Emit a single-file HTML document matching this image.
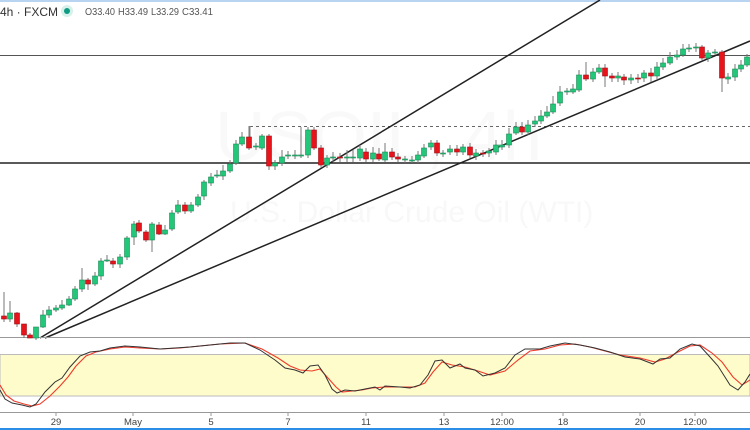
<!DOCTYPE html>
<html><head><meta charset="utf-8"><style>
html,body{margin:0;padding:0;background:#fff;width:750px;height:430px;overflow:hidden;font-family:"Liberation Sans",sans-serif}
svg{position:absolute;left:0;top:0}
.g{fill:#23c77a;stroke:#1b8a55;stroke-width:.6}
.r{fill:#e8141c;stroke:#a01015;stroke-width:.6}
</style></head><body>
<svg width="750" height="430" viewBox="0 0 750 430">
<rect x="0" y="0" width="750" height="2" fill="#b9d4f0"/>
<text x="0" y="16" font-size="12" fill="#333">4h · FXCM</text>
<circle cx="67" cy="11" r="6" fill="#d6f0ea"/><circle cx="67" cy="11" r="3" fill="#0e9a83"/>
<g font-size="10" fill="#555"><text x="85" y="15" textLength="30" lengthAdjust="spacingAndGlyphs">O33.40</text><text x="118" y="15" textLength="30" lengthAdjust="spacingAndGlyphs">H33.49</text><text x="151" y="15" textLength="28" lengthAdjust="spacingAndGlyphs">L33.29</text><text x="182" y="15" textLength="31" lengthAdjust="spacingAndGlyphs">C33.41</text></g>
<text x="215" y="160" font-size="70" fill="#f9f9f9">USOIL, 4h</text>
<text x="230" y="222" font-size="30" fill="#f8f8f8">U.S. Dollar Crude Oil (WTI)</text>
<line x1="0" y1="55.5" x2="750" y2="55.5" stroke="#555" stroke-width="1"/>
<line x1="0" y1="163" x2="750" y2="163" stroke="#222" stroke-width="1.5"/>
<line x1="250" y1="126.5" x2="750" y2="126.5" stroke="#666" stroke-width="1" stroke-dasharray="3,3"/>
<line x1="250" y1="126" x2="250" y2="138" stroke="#888"/>
<line x1="40" y1="338" x2="600" y2="0" stroke="#222" stroke-width="1.5"/>
<line x1="45" y1="338" x2="750" y2="41" stroke="#222" stroke-width="1.5"/>
<line x1="0" y1="337.5" x2="750" y2="337.5" stroke="#999"/>
<g>
<path stroke="#777" stroke-width="1" d="M4 292V322M10 301V322M17 312V327M24 324V338M30 333V338M36 327V340M43 310V328M49 306V318M56 305V312M62 300V310M69 296V306M75 286V301M82 268V292M88 278V290M95 272V286M101 258V280M107 255V262M113 258V268M120 254V268M127 236V260M134 221V245M139 220V233M146 230V242M152 222V252M159 222V235M165 225V235M172 210V231M178 200V214M185 202V214M191 202V213M198 194V207M204 180V200M211 173V186M217 170V178M223 165V180M230 160V173M236 140V165M242 132V146M249 126V150M256 143V150M262 134V150M269 134V170M275 160V170M282 150V166M288 151V159M295 150V159M301 127V158M308 127V158M314 127V150M321 145V168M327 155V168M333 152V162M340 153V162M347 150V162M353 150V162M360 145V161M366 148V162M373 147V162M379 148V161M385 143V162M392 148V160M398 153V162M405 156V163M412 156V163M418 151V163M424 144V158M431 140V150M437 140V156M443 150V157M450 145V155M457 145V156M463 144V155M470 143V158M476 149V160M483 150V157M489 148V157M496 140V155M502 140V150M509 128V148M516 122V135M522 122V135M528 120V135M535 116V127M541 110V124M547 106V118M553 96V114M560 86V106M567 88V95M573 84V94M579 70V92M586 62V81M593 68V82M599 64V74M605 64V87M612 73V82M618 72V82M624 74V85M631 74V84M638 74V83M644 70V82M651 68V82M657 62V80M663 58V70M670 52V65M677 50V60M683 44V57M689 44V52M696 43V52M702 45V60M708 50V62M715 49V55M722 50V92M728 73V84M735 64V81M741 60V72M747 54V67"/>
<rect class="r" x="1.5" y="316" width="5" height="3"/>
<rect class="g" x="7.5" y="313" width="5" height="6"/>
<rect class="r" x="14.5" y="313" width="5" height="11"/>
<rect class="r" x="21.5" y="324" width="5" height="11"/>
<rect class="r" x="27.5" y="335" width="5" height="3"/>
<rect class="g" x="33.5" y="327" width="5" height="11"/>
<rect class="g" x="40.5" y="315" width="5" height="12"/>
<rect class="g" x="46.5" y="310" width="5" height="5"/>
<rect class="g" x="53.5" y="308" width="5" height="2"/>
<rect class="g" x="59.5" y="305" width="5" height="3"/>
<rect class="g" x="66.5" y="299" width="5" height="6"/>
<rect class="g" x="72.5" y="289" width="5" height="10"/>
<rect class="g" x="79.5" y="280" width="5" height="9"/>
<rect class="r" x="85.5" y="280" width="5" height="4"/>
<rect class="g" x="92.5" y="276" width="5" height="8"/>
<rect class="g" x="98.5" y="261" width="5" height="15"/>
<rect class="g" x="104.5" y="260" width="5" height="1"/>
<rect class="r" x="110.5" y="261" width="5" height="3"/>
<rect class="g" x="117.5" y="257" width="5" height="7"/>
<rect class="g" x="124.5" y="238" width="5" height="19"/>
<rect class="g" x="131.5" y="224" width="5" height="13"/>
<rect class="r" x="136.5" y="223" width="5" height="8"/>
<rect class="r" x="143.5" y="232" width="5" height="8"/>
<rect class="g" x="149.5" y="224" width="5" height="16"/>
<rect class="r" x="156.5" y="225" width="5" height="9"/>
<rect class="g" x="162.5" y="230" width="5" height="4"/>
<rect class="g" x="169.5" y="213" width="5" height="16"/>
<rect class="g" x="175.5" y="205" width="5" height="7"/>
<rect class="r" x="182.5" y="205" width="5" height="6"/>
<rect class="g" x="188.5" y="205" width="5" height="6"/>
<rect class="g" x="195.5" y="197" width="5" height="8"/>
<rect class="g" x="201.5" y="182" width="5" height="14"/>
<rect class="g" x="208.5" y="177" width="5" height="6"/>
<rect class="g" x="214.5" y="175" width="5" height="1"/>
<rect class="g" x="220.5" y="171" width="5" height="5"/>
<rect class="g" x="227.5" y="164" width="5" height="7"/>
<rect class="g" x="233.5" y="144" width="5" height="19"/>
<rect class="g" x="239.5" y="137" width="5" height="7"/>
<rect class="r" x="246.5" y="137" width="5" height="11"/>
<rect class="g" x="253.5" y="146" width="5" height="1"/>
<rect class="g" x="259.5" y="136" width="5" height="12"/>
<rect class="r" x="266.5" y="136" width="5" height="30"/>
<rect class="g" x="272.5" y="163" width="5" height="3"/>
<rect class="g" x="279.5" y="157" width="5" height="6"/>
<rect class="g" x="285.5" y="155" width="5" height="1"/>
<rect class="g" x="292.5" y="155" width="5" height="1"/>
<rect class="g" x="298.5" y="155" width="5" height="1"/>
<rect class="g" x="305.5" y="130" width="5" height="25"/>
<rect class="r" x="311.5" y="130" width="5" height="18"/>
<rect class="r" x="318.5" y="148" width="5" height="17"/>
<rect class="g" x="324.5" y="158" width="5" height="7"/>
<rect class="g" x="330.5" y="157" width="5" height="1"/>
<rect class="r" x="337.5" y="157" width="5" height="1"/>
<rect class="g" x="344.5" y="157" width="5" height="1"/>
<rect class="g" x="350.5" y="157" width="5" height="1"/>
<rect class="g" x="357.5" y="149" width="5" height="9"/>
<rect class="r" x="363.5" y="152" width="5" height="7"/>
<rect class="g" x="370.5" y="153" width="5" height="6"/>
<rect class="r" x="376.5" y="154" width="5" height="5"/>
<rect class="g" x="382.5" y="152" width="5" height="8"/>
<rect class="r" x="389.5" y="152" width="5" height="5"/>
<rect class="r" x="395.5" y="157" width="5" height="2"/>
<rect class="g" x="402.5" y="159" width="5" height="1"/>
<rect class="g" x="409.5" y="160" width="5" height="1"/>
<rect class="g" x="415.5" y="155" width="5" height="5"/>
<rect class="g" x="421.5" y="148" width="5" height="8"/>
<rect class="g" x="428.5" y="143" width="5" height="4"/>
<rect class="r" x="434.5" y="143" width="5" height="10"/>
<rect class="g" x="440.5" y="153" width="5" height="1"/>
<rect class="g" x="447.5" y="149" width="5" height="3"/>
<rect class="r" x="454.5" y="149" width="5" height="3"/>
<rect class="g" x="460.5" y="147" width="5" height="5"/>
<rect class="r" x="467.5" y="147" width="5" height="8"/>
<rect class="g" x="473.5" y="153" width="5" height="3"/>
<rect class="r" x="480.5" y="153" width="5" height="1"/>
<rect class="g" x="486.5" y="151" width="5" height="2"/>
<rect class="g" x="493.5" y="145" width="5" height="7"/>
<rect class="g" x="499.5" y="145" width="5" height="2"/>
<rect class="g" x="506.5" y="134" width="5" height="11"/>
<rect class="g" x="513.5" y="127" width="5" height="6"/>
<rect class="r" x="519.5" y="127" width="5" height="5"/>
<rect class="g" x="525.5" y="125" width="5" height="7"/>
<rect class="g" x="532.5" y="121" width="5" height="3"/>
<rect class="g" x="538.5" y="116" width="5" height="5"/>
<rect class="g" x="544.5" y="112" width="5" height="4"/>
<rect class="g" x="550.5" y="104" width="5" height="8"/>
<rect class="g" x="557.5" y="92" width="5" height="11"/>
<rect class="g" x="564.5" y="91" width="5" height="1"/>
<rect class="g" x="570.5" y="89" width="5" height="3"/>
<rect class="g" x="576.5" y="75" width="5" height="15"/>
<rect class="r" x="583.5" y="75" width="5" height="4"/>
<rect class="g" x="590.5" y="72" width="5" height="7"/>
<rect class="g" x="596.5" y="68" width="5" height="4"/>
<rect class="r" x="602.5" y="68" width="5" height="8"/>
<rect class="r" x="609.5" y="76" width="5" height="2"/>
<rect class="g" x="615.5" y="76" width="5" height="2"/>
<rect class="r" x="621.5" y="77" width="5" height="3"/>
<rect class="g" x="628.5" y="78" width="5" height="2"/>
<rect class="r" x="635.5" y="78" width="5" height="1"/>
<rect class="g" x="641.5" y="73" width="5" height="5"/>
<rect class="r" x="648.5" y="73" width="5" height="3"/>
<rect class="g" x="654.5" y="67" width="5" height="9"/>
<rect class="g" x="660.5" y="63" width="5" height="4"/>
<rect class="g" x="667.5" y="57" width="5" height="6"/>
<rect class="g" x="674.5" y="55" width="5" height="2"/>
<rect class="g" x="680.5" y="49" width="5" height="6"/>
<rect class="g" x="686.5" y="48" width="5" height="1"/>
<rect class="g" x="693.5" y="47" width="5" height="1"/>
<rect class="r" x="699.5" y="47" width="5" height="11"/>
<rect class="g" x="705.5" y="53" width="5" height="5"/>
<rect class="g" x="712.5" y="52" width="5" height="1"/>
<rect class="r" x="719.5" y="52" width="5" height="26"/>
<rect class="g" x="725.5" y="77" width="5" height="2"/>
<rect class="g" x="732.5" y="69" width="5" height="8"/>
<rect class="g" x="738.5" y="65" width="5" height="4"/>
<rect class="g" x="744.5" y="57" width="5" height="8"/>
</g>
<rect x="0" y="354.5" width="750" height="41.5" fill="#fffccc" stroke="#bbb" stroke-width="1"/>
<polyline fill="none" stroke="#f03a2a" stroke-width="1.1" points="0,385 6,395 14,401 24,404 32,406 40,404 50,396 60,386 68,377 76,366 86,356 96,352 110,349 125,347 140,348 160,349 180,348 200,346 220,344 245,343 262,349 278,358 290,366 300,370 312,371 320,369 328,378 336,387 342,392 352,391 362,390 372,388 385,387 400,387 415,387 425,383 433,372 442,362 452,365 465,367 478,371 490,375 505,371 518,360 530,351 545,349 560,345 575,344 590,347 605,351 620,355 640,358 655,362 665,359 678,352 690,346 700,345 712,353 722,362 733,377 742,385 750,380"/>
<polyline fill="none" stroke="#333" stroke-width="1" points="0,390 5,399 12,403 22,405 30,407 36,404 45,392 55,382 62,378 70,367 80,356 90,352 100,351 110,348 125,346 140,347 160,349 175,348 190,347 210,345 230,343 245,343 260,350 275,360 285,368 295,370 303,373 310,366 318,365 325,375 332,389 337,393 345,390 355,391 365,389 375,387 380,390 385,386 400,387 410,388 420,385 428,375 435,361 442,360 450,368 460,364 465,368 475,370 483,376 495,373 505,368 515,355 525,349 540,349 550,346 565,343 580,345 595,348 610,352 625,357 640,359 653,364 660,359 670,358 680,349 692,344 700,346 710,357 718,366 730,385 738,390 745,382 750,374"/>
<line x1="0" y1="412.5" x2="750" y2="412.5" stroke="#999"/>
<g font-size="9.5" fill="#444" text-anchor="middle">
<text x="56" y="425">29</text><text x="133" y="425">May</text><text x="211" y="425">5</text><text x="288" y="425">7</text><text x="366" y="425">11</text><text x="444" y="425">13</text><text x="502" y="425">12:00</text><text x="563" y="425">18</text><text x="640" y="425">20</text><text x="695" y="425">12:00</text>
</g>
<g stroke="#999"><line x1="56" y1="413" x2="56" y2="416"/><line x1="133" y1="413" x2="133" y2="416"/><line x1="211" y1="413" x2="211" y2="416"/><line x1="288" y1="413" x2="288" y2="416"/><line x1="366" y1="413" x2="366" y2="416"/><line x1="444" y1="413" x2="444" y2="416"/><line x1="502" y1="413" x2="502" y2="416"/><line x1="563" y1="413" x2="563" y2="416"/><line x1="640" y1="413" x2="640" y2="416"/><line x1="695" y1="413" x2="695" y2="416"/></g>
<rect x="0" y="428" width="750" height="2" fill="#2a8ee6"/>
</svg>
</body></html>
